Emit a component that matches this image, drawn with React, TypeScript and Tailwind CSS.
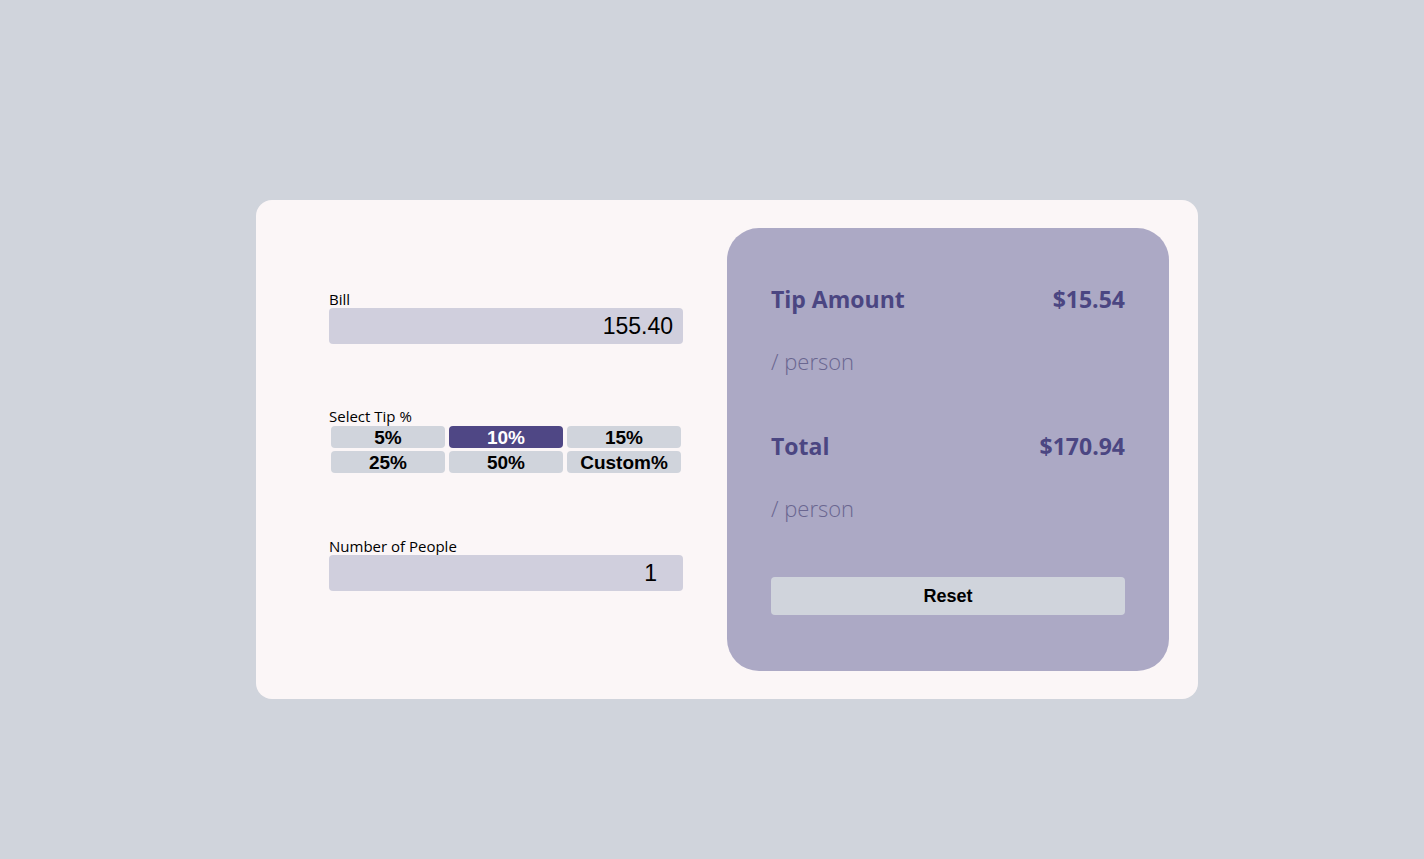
const tips = ['5%', '10%', '15%', '25%', '50%', 'Custom%'];

function Field({ label, value, padRight }: { label: string; value: string; padRight: string }) {
  return (
    <div className="flex flex-col">
      <label className="text-[15px] leading-[18px] text-black">{label}</label>
      <div
        className={`h-[36px] rounded-[4px] bg-[#d0cfdd] flex items-center justify-end ${padRight} text-[23px] text-black font-['Liberation_Sans',Arial,sans-serif]`}
      >
        {value}
      </div>
    </div>
  );
}

function ResultRow({ title, amount }: { title: string; amount: string }) {
  return (
    <div className="flex flex-col">
      <div className="flex items-center justify-between h-[30px] text-[23px] font-bold text-[#4b4682]">
        <span>{title}</span>
        <span>{amount}</span>
      </div>
      <div className="mt-[32px] h-[30px] flex items-center text-[22px] font-light text-[#6a6690]">/ person</div>
    </div>
  );
}

export default function App() {
  return (
    <div className="min-h-screen bg-[#d0d4dc] pt-[200px] pl-[256px] font-['Open_Sans',sans-serif]">
      <div className="w-[942px] h-[499px] bg-[#fbf6f7] rounded-[16px] flex items-center pl-[73px] pr-[29px]">
        <div className="w-[354px] mb-[18px] flex flex-col">
          <Field label="Bill" value="155.40" padRight="pr-[10px]" />
          <div className="mt-[62px] flex flex-col">
            <label className="text-[15px] leading-[20px] text-black">Select Tip %</label>
            <div className="grid grid-cols-3 gap-x-[4px] gap-y-[3px] px-[2px] font-['Liberation_Sans',Arial,sans-serif]">
              {tips.map((t) => (
                <button
                  key={t}
                  className={
                    t === '10%'
                      ? 'h-[22px] rounded-[4px] bg-[#4f4785] text-white text-[19px] font-bold leading-none'
                      : 'h-[22px] rounded-[4px] bg-[#d0d4dc] text-black text-[19px] font-bold leading-none'
                  }
                >
                  {t}
                </button>
              ))}
            </div>
          </div>
          <div className="mt-[64px]">
            <Field label="Number of People" value="1" padRight="pr-[26px]" />
          </div>
        </div>
        <div className="ml-[44px] w-[442px] h-[443px] rounded-[32px] bg-[#aca9c5] px-[44px] pt-[56px] flex flex-col">
          <ResultRow title="Tip Amount" amount="$15.54" />
          <div className="mt-[55px]">
            <ResultRow title="Total" amount="$170.94" />
          </div>
          <button className="mt-[54px] h-[38px] rounded-[4px] bg-[#d0d4dc] text-black text-[18px] font-bold font-['Liberation_Sans',Arial,sans-serif]">
            Reset
          </button>
        </div>
      </div>
    </div>
  );
}
